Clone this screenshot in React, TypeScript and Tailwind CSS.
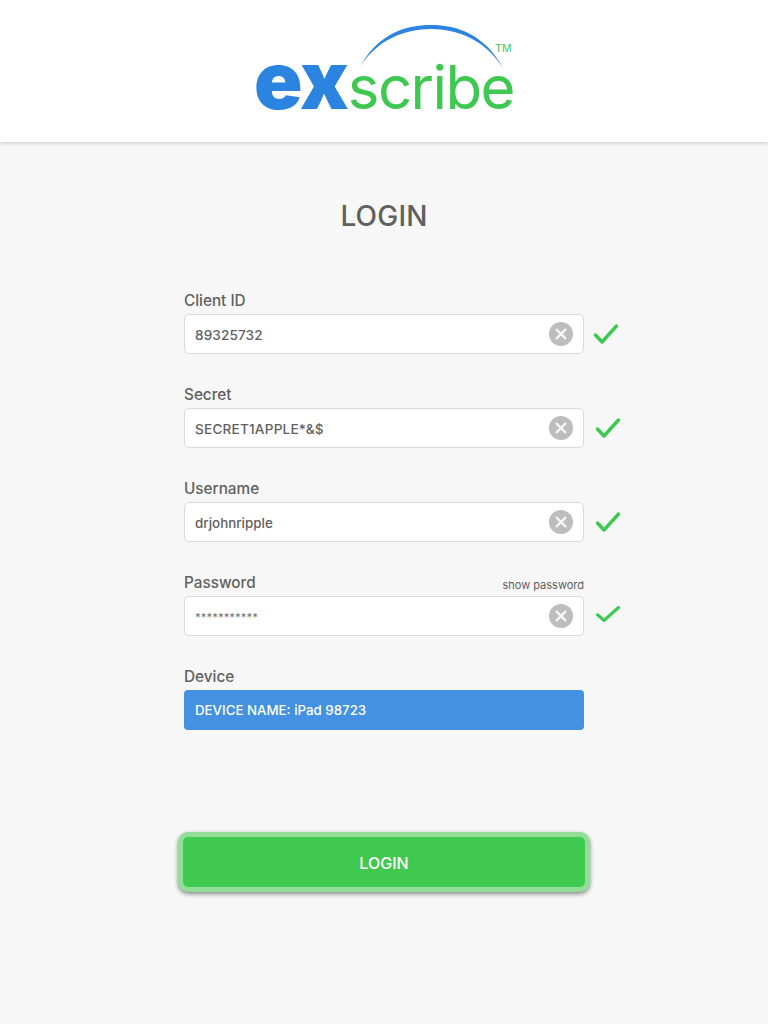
const fields = [
  { label: 'Client ID', value: 'text-[13.6px] tracking-[0.1px]', text: '89325732', checkClass: 'ml-[9px]' },
  { label: 'Secret', value: 'text-[13.6px] tracking-[0.2px]', text: 'SECRET1APPLE*&$', checkClass: 'ml-[11px]' },
  { label: 'Username', value: 'text-[13.4px]', text: 'drjohnripple', checkClass: 'ml-[11px]' },
  { label: 'Password', value: 'text-[11px] text-[#777777]', text: '***********', checkClass: 'ml-[11px] -mt-[5px]', showPassword: true, flat: true },
];

const ClearIcon = () => (
  <svg width="24" height="24" viewBox="0 0 24 24" className="shrink-0">
    <circle cx="12" cy="12" r="12" fill="#bdbdbd" />
    <path d="M7.6 7.6l8.8 8.8M16.4 7.6l-8.8 8.8" stroke="#f7f7f7" strokeWidth="2.2" strokeLinecap="round" />
  </svg>
);

const CheckIcon = ({ flat }: { flat?: boolean }) => (
  <svg width="26" height={flat ? 18 : 22} viewBox="0 0 26 22" preserveAspectRatio="none" className="shrink-0 block">
    <path d="M2.5 12l6.500 7L23.500 3" fill="none" stroke="#3fc84f" strokeWidth="3.4" strokeLinecap="round" strokeLinejoin="round" />
  </svg>
);

const Logo = () => (
  <div className="relative w-[260px] h-[142px]">
    <svg width="146" height="50" viewBox="0 0 146 50" className="absolute left-[105px] top-[20px]">
      <path d="M1 47C18 15 45 5 72 5C99 5 126 15 144 48C126 20 99 9 72 9C45 9 18 20 1 47z" fill="#2b84e0" />
    </svg>
    <span className="absolute left-[241px] top-[43px] text-[11.5px] leading-none text-[#3fc84f] font-['Liberation_Sans',sans-serif]">TM</span>
    <div className="absolute left-[0px] top-[40px] flex items-baseline whitespace-nowrap">
      <span className="text-[80px] leading-none font-black tracking-[-1px] text-[#2b84e0] font-['Inter',sans-serif]">ex</span>
      <span className="text-[60px] leading-[40px] font-[375] text-[#3fc84f] font-['Inter',sans-serif] tracking-[-1.6px]">scribe</span>
    </div>
  </div>
);

export default function App() {
  return (
    <div className="min-h-[1024px] w-[768px] bg-[#f7f7f7] font-['Inter',sans-serif] text-[#606060] overflow-hidden">
      {/* Header */}
      <header className="h-[142px] bg-white flex justify-center shadow-[0_1px_4px_rgba(0,0,0,0.2)]">
        <Logo />
      </header>

      <h1 className="mt-[57px] text-center text-[28px] leading-[34px] font-medium tracking-[0.2px]">LOGIN</h1>

      {/* Form */}
      <div className="mt-[55px] ml-[184px] flex flex-col gap-[28px]">
        {fields.map((field) => (
          <div key={field.label}>
            <div className="w-[400px] h-[26px] pt-[3px] flex items-start justify-between">
              <span className="text-[15.3px] leading-[20px] font-medium">{field.label}</span>
              {field.showPassword && <span className="mt-[5px] text-[11px] leading-[15px]">show password</span>}
            </div>
            <div className="flex items-center">
              <div className="w-[400px] h-[40px] bg-white border border-[#d9d9d9] rounded-[5px] pl-[10px] pr-[10px] flex items-center justify-between">
                <span className={`font-medium pt-[2px] ${field.value}`}>{field.text}</span>
                <ClearIcon />
              </div>
              <div className={field.checkClass}>
                <CheckIcon flat={field.flat} />
              </div>
            </div>
          </div>
        ))}

        <div>
          <div className="h-[26px] pt-[3px] text-[15.3px] leading-[20px] font-medium">Device</div>
          <div className="w-[400px] h-[40px] bg-[#4391e0] rounded-[4px] pl-[11px] pt-[2px] flex items-center text-[13.3px] font-medium text-white">
            DEVICE NAME: iPad 98723
          </div>
        </div>
      </div>

      <button className="block mt-[102px] ml-[178px] w-[412px] h-[60px] pt-[2px] bg-[#40c94f] border-[5px] border-[#92dd99] rounded-[10px] shadow-[0_2px_4px_rgba(0,0,0,0.45)] text-white text-[16px] font-medium">
        LOGIN
      </button>
    </div>
  );
}
